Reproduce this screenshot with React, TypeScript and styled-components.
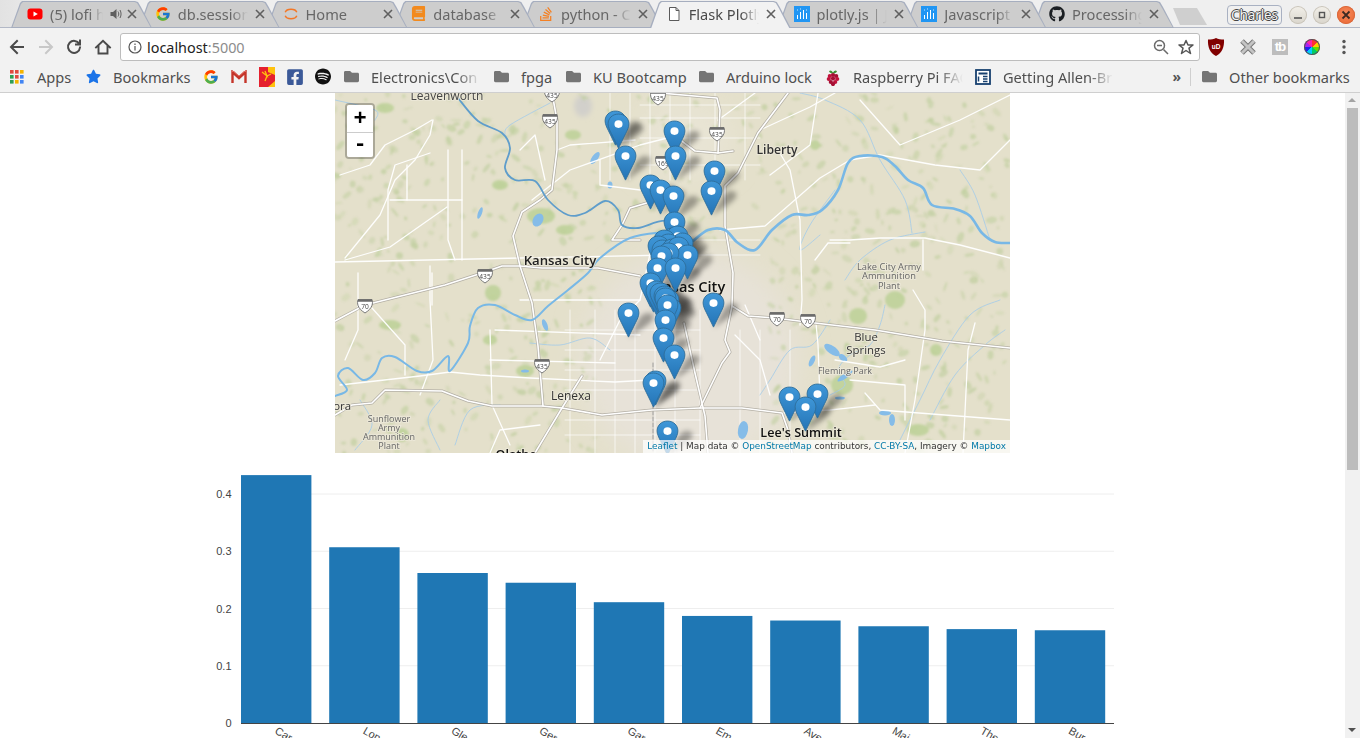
import React from "react";
import styled, { createGlobalStyle } from "styled-components";
import { FcGoogle } from "react-icons/fc";
import { FaGithub, FaStackOverflow, FaBook, FaFacebookSquare, FaSpotify, FaFolder, FaStar } from "react-icons/fa";

const Global = createGlobalStyle`
  html, body { margin: 0; height: 100%; overflow: hidden; background: #fff; }
  #root { height: 100%; }
`;

const UI = `"Noto Sans", "Open Sans", sans-serif`;

const Shell = styled.div`
  height: 738px; width: 1360px; display: flex; flex-direction: column; overflow: hidden;
  font-family: ${UI};
`;

/* ---------- tab strip ---------- */
const TabStrip = styled.div`
  height: 28px; flex: none; display: flex; align-items: flex-end; padding-left: 11px;
  background: linear-gradient(90deg, #e2e2e2 0, #efefef 60px, #efefef 100%);
  box-shadow: inset 0 -1px 0 #b2b8c6; position: relative;
`;
const TabBox = styled.div<{ $active?: boolean; $index: number }>`
  position: relative; width: 141px; height: 27px; margin-right: -13.25px; flex: none;
  display: flex; align-items: center; padding: 0 15px 2px 16px; box-sizing: border-box; gap: 7px;
  z-index: ${p => (p.$active ? 20 : 10 - p.$index)};
  color: ${p => (p.$active ? "#4a4a4a" : "#676767")};
  &::before {
    content: ""; position: absolute; inset: 0; background: #a6aebf;
    clip-path: polygon(0 100%, 9px 2px, 11px 0, 124px 0, 127px 1px, 130px 6px, 141px 100%);
  }
  &::after {
    content: ""; position: absolute; inset: 0 0 ${p => (p.$active ? "0" : "1px")} 0;
    background: ${p => (p.$active ? "#f2f2f2" : "#cdcdcd")};
    clip-path: polygon(1.5px 100%, 10px 3px, 12px 1px, 123.5px 1px, 126px 2px, 129px 7px, 139.5px 100%);
  }
  & > * { position: relative; z-index: 1; }
`;
const Favicon = styled.span`
  width: 16px; height: 16px; flex: none; display: flex; align-items: center; justify-content: center;
`;
const TabTitle = styled.span`
  flex: 1; min-width: 0; white-space: nowrap; overflow: hidden; font-size: 14.6px; line-height: 20px;
  -webkit-mask-image: linear-gradient(90deg, #000 75%, transparent 100%);
  mask-image: linear-gradient(90deg, #000 75%, transparent 100%);
`;
const CloseGlyph = styled.svg`
  width: 10px; height: 10px; flex: none; stroke: #5f5f5f; stroke-width: 1.6; fill: none;
`;
const NewTab = styled.div`
  position: absolute; left: 1173px; top: 8px; width: 34px; height: 17px; background: #cfcfcf;
  clip-path: polygon(0 0, 24px 0, 34px 100%, 7px 100%); 
`;
const WindowArea = styled.div`
  position: absolute; right: 5px; top: 5px; height: 20px; display: flex; align-items: center; gap: 6px;
`;
const ProfileButton = styled.div`
  width: 55px; height: 20px; box-sizing: border-box; border: 1px solid #a9b1c2; border-radius: 4px;
  margin-right: 1px; display: flex; align-items: center; justify-content: center;
  background: #f0f0f0; font-size: 13.5px; letter-spacing: -0.1px; color: #f4f4f4;
  text-shadow: 1px 0 0 #444, -1px 0 0 #444, 0 1px 0 #444, 0 -1px 0 #444;
`;
const WinBtn = styled.div<{ $close?: boolean }>`
  width: 18px; height: 18px; border-radius: 50%; display: flex; align-items: center; justify-content: center;
  background: ${p => (p.$close ? "radial-gradient(circle at 50% 40%, #f58a5c, #e9622d)" : "linear-gradient(#f3f0ea, #d9d5cc)")};
  box-shadow: inset 0 0 0 1px ${p => (p.$close ? "#d96a3d" : "#c9c4ba")};
`;

/* ---------- toolbar ---------- */
const Toolbar = styled.div`
  height: 34px; flex: none; background: #f2f2f2; display: flex; align-items: center; padding: 4px 0 0 3px; box-sizing: border-box;
`;
const NavBtn = styled.div`
  width: 28.5px; height: 28px; flex: none; display: flex; align-items: center; justify-content: center;
`;
const Omnibox = styled.div`
  width: 1080px; height: 28px; flex: none; margin: 0 0 0 3px; box-sizing: border-box; background: #fff;
  border: 1px solid #bdbdbd; border-radius: 3px; display: flex; align-items: center; padding: 0 1px 0 7px;
`;
const Url = styled.div`
  flex: 1; font-size: 14.4px; color: #222; margin-left: 5px; white-space: nowrap;
`;
const Port = styled.span`
  color: #8c8c8c;
`;
const OmniIcon = styled.div`
  width: 25px; height: 20px; display: flex; align-items: center; justify-content: center; flex: none;
`;
const ExtBtn = styled.div`
  width: 32px; height: 28px; flex: none; display: flex; align-items: center; justify-content: center;
`;
const TbBadge = styled.div`
  width: 16px; height: 16px; background: #bdbdbd; color: #fff; font: bold 13.5px/16px "Liberation Sans", sans-serif; text-align: center; letter-spacing: -1px;
`;
const ColorWheel = styled.div`
  width: 16px; height: 16px; border-radius: 50%; position: relative;
  background: conic-gradient(#f33 0 45deg, #fc0 45deg 90deg, #6d0 90deg 135deg, #0c6 135deg 180deg, #0cf 180deg 225deg, #22e 225deg 270deg, #a2e 270deg 315deg, #f2a 315deg 360deg);
  box-shadow: 0 0 0 1px #555 inset;
`;

/* ---------- bookmarks ---------- */
const BookmarkBar = styled.div`
  height: 31px; flex: none; box-sizing: border-box; background: #f2f2f2; border-bottom: 1px solid #cfcfcf;
  display: flex; align-items: center; padding: 0 10px 1px 9px;
`;
const Bookmark = styled.div<{ $w: number }>`
  width: ${p => p.$w}px; flex: none; display: flex; align-items: center; gap: 12px; min-width: 0;
`;
const BookmarkLabel = styled.span<{ $fade?: boolean }>`
  font-size: 14.6px; color: #4f4f4f; white-space: nowrap; overflow: hidden;
  ${p => p.$fade && `flex: 1; min-width: 0; margin-right: 12px; -webkit-mask-image: linear-gradient(90deg, #000 78%, transparent 100%); mask-image: linear-gradient(90deg, #000 78%, transparent 100%);`}
`;
const IconSlot = styled.span`
  width: 16px; height: 16px; flex: none; display: flex; align-items: center; justify-content: center;
`;
const BarSpacer = styled.div` flex: 1; `;
const Chevron = styled.span`
  font-size: 14px; color: #555; font-weight: 700; margin-right: 9px; line-height: 1;
`;
const BarDivider = styled.div`
  width: 1px; height: 18px; background: #cfcfcf; margin-right: 10px;
`;

/* ---------- page ---------- */
const Viewport = styled.div`
  flex: 1; display: flex; min-height: 0;
`;
const PageBody = styled.main`
  flex: 1; min-width: 0; overflow: hidden; display: flex; flex-direction: column; align-items: center; background: #fff;
`;
const Scrollbar = styled.div`
  width: 15px; flex: none; background: #f1f1f1; display: flex; flex-direction: column; align-items: center; position: relative;
`;
const ScrollArrow = styled.div<{ $down?: boolean }>`
  position: absolute; ${p => (p.$down ? "bottom: 6px;" : "top: 5px;")} left: 3px; width: 0; height: 0;
  border-left: 4px solid transparent; border-right: 4px solid transparent;
  ${p => (p.$down ? "border-top: 4px solid #505050;" : "border-bottom: 4px solid #a3a3a3;")}
`;
const ScrollThumb = styled.div`
  margin-top: 15px; width: 11px; height: 362px; background: #bcbcbc; margin-left: 2px; align-self: flex-start;
`;

/* ---------- map ---------- */
const MapFrame = styled.section`
  position: relative; width: 675px; height: 360px; flex: none; overflow: hidden; background: #e4e0cb;
`;
const MapArt = styled.svg`
  display: block; width: 675px; height: 360px;
`;
const PinSvg = styled.svg`
  position: absolute; width: 23px; height: 36px; overflow: visible;
`;
const PinShadow = styled.svg`
  position: absolute; width: 42px; height: 36px; overflow: visible;
`;
const ZoomBox = styled.div`
  position: absolute; left: 10px; top: 10px; width: 30px; height: 56px; box-sizing: border-box;
  border: 2px solid rgba(0,0,0,.25); border-radius: 4px; background-clip: padding-box; display: flex; flex-direction: column; z-index: 5;
`;
const ZoomBtn = styled.div<{ $last?: boolean }>`
  flex: 1; background: #fff; display: flex; align-items: center; justify-content: center;
  font: bold 22px/1 "Liberation Mono", monospace; color: #000;
  ${p => (p.$last ? "border-radius: 0 0 2px 2px;" : "border-bottom: 1px solid #ccc; border-radius: 2px 2px 0 0; padding-top: 3px;")}
`;
const Attribution = styled.div`
  position: absolute; right: 0; bottom: 0; height: 13px; padding: 0 4px; z-index: 5; white-space: nowrap;
  background: rgba(255,255,255,.72); color: #333; font: 8.9px/13px "DejaVu Sans", sans-serif;
`;
const AttrLink = styled.span` color: #0078a8; `;

const ChartArt = styled.svg`
  display: block; width: 1100px; height: 285px; flex: none;
`;

/* ---------- helpers ---------- */
type P = [number, number];
const smooth = (pts: P[]) => {
  let d = `M${pts[0][0]} ${pts[0][1]}`;
  for (let i = 0; i < pts.length - 1; i++) {
    const a = pts[Math.max(i - 1, 0)], b = pts[i], c = pts[i + 1], e = pts[Math.min(i + 2, pts.length - 1)];
    d += `C${(b[0] + (c[0] - a[0]) / 6).toFixed(1)} ${(b[1] + (c[1] - a[1]) / 6).toFixed(1)} ${(c[0] - (e[0] - b[0]) / 6).toFixed(1)} ${(c[1] - (e[1] - b[1]) / 6).toFixed(1)} ${c[0]} ${c[1]}`;
  }
  return d;
};
const line = (pts: P[]) => "M" + pts.map(p => p.join(" ")).join("L");

const missouri: P[] = [[1010,243],[995,242],[982,233],[970,216],[955,209],[932,205],[923,188],[908,180],[895,166],[882,157],[860,156],[848,163],[838,190],[822,210],[808,215],[792,215],[772,230],[755,250],[738,243],[725,230],[708,230],[693,241]];
const missouriWest: P[] = [[458,98],[478,121],[502,133],[510,148],[505,168],[515,180],[535,181],[548,200],[568,215],[585,213],[605,201],[618,210],[622,225],[638,228],[668,221],[693,241]];
const kaw: P[] = [[665,232],[630,238],[600,258],[588,273],[568,290],[548,306],[532,320],[515,315],[495,305],[478,308],[470,326],[468,343],[450,371],[448,356],[432,371],[417,371],[395,357],[382,358],[375,373],[363,380],[348,368],[338,376],[347,390],[335,396]];
const thinWater: P[] = [
  [[885,305],[880,325],[870,345],[850,355],[838,370],[845,385],[830,395]],
  [[912,233],[905,200],[880,160],[860,120],[825,100],[800,93]],
  [[960,170],[975,195],[990,240]],
  [[845,280],[860,260],[890,240],[925,232]],
  [[820,235],[800,250],[810,225],[835,190]],
  [[830,320],[812,345],[790,350],[770,380],[760,395]],
  [[1000,300],[970,315],[940,360],[920,400],[900,440]],
  [[1005,330],[985,345],[955,375],[930,420]],
  [[440,400],[428,420],[440,450]],
  [[360,400],[372,425],[355,450]],
  [[500,405],[470,410],[455,445]],
  [[610,350],[590,338],[560,345],[530,343]],
  [[335,100],[375,110],[375,120]],
  [[550,103],[510,125],[505,135]],
];
const highways: P[][] = [
  [[552,93],[557,120],[557,150],[552,190],[540,200],[522,212],[513,236],[520,266],[532,303],[538,346],[543,406]],
  [[335,321],[365,305],[445,285],[482,273],[502,266],[520,266],[542,268],[598,268],[640,276]],
  [[732,306],[748,316],[775,318],[815,323],[875,330],[942,341],[1010,348]],
  [[788,93],[758,133],[738,173],[725,186],[725,226],[733,273],[732,306],[725,340],[730,352],[722,363],[700,408]],
  [[660,93],[717,98],[720,110],[718,153],[733,151]],
  [[675,136],[695,151],[718,153]],
  [[684,323],[695,373],[705,416],[708,453]],
  [[335,415],[352,405],[372,403],[385,390],[442,391],[468,401],[492,406],[542,406],[562,408],[602,415],[652,410],[700,408],[742,408],[782,413],[788,430],[792,453]],
  [[582,376],[562,408],[535,453]],
  [[640,240],[612,240],[622,225],[630,208],[670,196]],
];
const roads: P[][] = [
  [[335,262],[520,258],[670,255]],
  [[345,258],[380,215],[395,180],[415,160],[430,135],[433,120]],
  [[340,175],[370,165],[385,145],[415,130],[432,120]],
  [[388,240],[388,190],[395,165],[430,153]],
  [[448,150],[448,240],[455,260]],
  [[462,150],[462,200],[462,260]],
  [[407,200],[462,200]],
  [[390,200],[407,200],[407,165]],
  [[430,266],[430,300],[433,360],[420,395]],
  [[490,330],[492,405],[510,445]],
  [[532,200],[570,170],[640,145],[675,136]],
  [[557,150],[570,145],[635,140]],
  [[600,160],[600,185],[640,190]],
  [[755,93],[725,115],[718,120]],
  [[760,130],[810,107],[835,93]],
  [[770,175],[810,145],[818,93]],
  [[778,150],[790,170],[800,220],[802,300],[800,325]],
  [[720,230],[765,226],[820,178],[850,160],[880,155],[935,165],[980,170],[1010,140]],
  [[830,240],[850,240],[880,238],[925,238],[960,245],[1010,258]],
  [[815,260],[828,243],[850,243]],
  [[923,240],[923,270]],
  [[816,323],[818,345],[820,400]],
  [[835,360],[880,367],[905,360]],
  [[913,290],[925,310],[925,330],[915,400],[905,453]],
  [[975,323],[968,350],[963,453]],
  [[865,393],[880,410],[1010,420]],
  [[782,413],[830,410],[875,405]],
  [[340,385],[420,376],[450,372],[480,375],[530,378],[615,382],[650,380]],
  [[520,300],[640,300]],
  [[495,330],[640,335]],
  [[490,360],[615,363]],
  [[735,335],[760,360],[770,395]],
  [[760,340],[745,305]],
  [[520,150],[535,135],[545,180]],
  [[447,207],[390,247],[345,260]],
  [[653,240],[640,300],[620,320],[600,360]],
  [[358,273],[358,330],[345,360]],
  [[432,273],[432,305]],
  [[372,308],[405,345],[405,375]],
  [[860,100],[900,145],[960,120],[1010,95]],
  [[850,380],[905,385],[905,420]],
  [[540,425],[500,430],[490,453]],
];
const grid: P[][] = [];
[570,595,615,635,655,675,700].forEach(x => grid.push([[x, 310],[x, 453]]));
[330,350,370,390,420,435].forEach(y => grid.push([[565, y],[700, y]]));
[610,630,650,670,690,715,745].forEach(x => grid.push([[x, 93],[x, 180]]));
[105,118,138,165].forEach(y => grid.push([[640, y],[760, y]]));
[240,255].forEach(y => grid.push([[680, y],[760, y]]));
[740,760,790].forEach(x => grid.push([[x, 330],[x, 453]]));

let seed = 17;
const rnd = () => { seed = (seed * 16807) % 2147483647; return seed / 2147483647; };
const blotches = Array.from({ length: 900 }, () => {
  const cx = 335 + rnd() * 675, cy = 93 + rnd() * 360;
  return { cx: +cx.toFixed(1), cy: +cy.toFixed(1), rx: +(1.2 + rnd() * 4.5).toFixed(1), ry: +(0.8 + rnd() * 2.6).toFixed(1), o: +(0.3 + rnd() * 0.45).toFixed(2), r: Math.round(rnd() * 180) };
}).filter(b => !(b.cx > 600 && b.cx < 770 && b.cy > 240));
const greenPatches: [number, number, number, number][] = [
  [541,216,14,8],[573,135,8,5],[500,185,8,5],[493,293,8,8],[525,371,9,6],[858,316,9,8],[895,300,10,9],[936,350,6,6],
  [918,430,11,6],[842,385,11,10],[815,145,5,5],[490,340,7,5],[390,325,11,5],[402,435,7,7],[385,108,9,5],[565,230,9,5],
];
const lakes: [number, number, number, number, number][] = [
  [538,220,5,7,30],[595,158,3,7,35],[610,185,2.5,3.5,0],[480,213,2,6,20],[545,325,2.5,6,-20],[525,371,4,1.6,0],[832,350,9,4,35],[843,358,5,3,40],[845,376,9,2.5,-35],[812,361,2.5,6,25],[743,430,5,9,10],[885,413,6,2.5,0],[892,420,3,6,0],[840,398,5,1.5,0],
];
const shields: [number, number, string][] = [[552,95,"435"],[550,121,"435"],[658,98,"435"],[717,134,"435"],[663,163,"169"],[542,366,"435"],[365,306,"70"],[485,276,"435"],[777,319,"70"],[808,321,"70"]];
const labels: { x: number; y: number; t: string; s: number; c?: string; w?: number; a?: "start" | "middle" | "end" }[] = [
  { x: 447, y: 100, t: "Leavenworth", s: 12, c: "#444", a: "middle" },
  { x: 560, y: 265, t: "Kansas City", s: 13.2, c: "#222", w: 600, a: "middle" },
  { x: 685, y: 292, t: "Kansas City", s: 14.6, c: "#111", w: 600, a: "middle" },
  { x: 777, y: 154, t: "Liberty", s: 12.2, c: "#333", w: 600, a: "middle" },
  { x: 889, y: 270, t: "Lake City Army", s: 9.3, c: "#666", a: "middle" },
  { x: 889, y: 279, t: "Ammunition", s: 9.3, c: "#666", a: "middle" },
  { x: 889, y: 289, t: "Plant", s: 9.3, c: "#666", a: "middle" },
  { x: 866, y: 341, t: "Blue", s: 11.4, c: "#333", a: "middle" },
  { x: 866, y: 354, t: "Springs", s: 11.4, c: "#333", a: "middle" },
  { x: 845, y: 374, t: "Fleming Park", s: 9, c: "#666", a: "middle" },
  { x: 571, y: 400, t: "Lenexa", s: 12, c: "#333", a: "middle" },
  { x: 389, y: 422, t: "Sunflower", s: 9, c: "#666", a: "middle" },
  { x: 389, y: 431, t: "Army", s: 9, c: "#666", a: "middle" },
  { x: 389, y: 440, t: "Ammunition", s: 9, c: "#666", a: "middle" },
  { x: 389, y: 449, t: "Plant", s: 9, c: "#666", a: "middle" },
  { x: 801, y: 437, t: "Lee's Summit", s: 12.6, c: "#111", w: 600, a: "middle" },
  { x: 516, y: 459, t: "Olathe", s: 12.6, c: "#111", w: 600, a: "middle" },
  { x: 351, y: 410, t: "ora", s: 11.4, c: "#333", a: "end" },
];

/* marker dots, in page coordinates */
const pinDots: P[] = [
  [615,121],[618,124],[674,131],[625,156],[675,156],[714,171],[650,185],[711,191],[660,190],[673,196],[674,222],
  [672,238],[677,236],[664,240],[682,243],[668,244],[658,246],[662,250],[672,249],[678,247],[687,255],[668,253],[661,256],[657,268],[675,268],
  [653,288],[650,283],[656,291],[660,293],[664,296],[668,300],[665,298],[670,308],[667,305],[628,313],[713,303],[665,320],[663,338],[674,355],[655,381],[653,383],
  [667,431],[789,397],[817,394],[805,407],
];

const PIN = "M12.5 1.2C5.8 1.2 1.2 6.2 1.2 12.4C1.2 16 3 19.8 4.8 23.5L12.5 40L20.2 23.5C22 19.8 23.8 16 23.8 12.4C23.8 6.2 19.2 1.2 12.5 1.2Z";

const Pin = ({ at }: { at: P }) => (
  <PinSvg viewBox="0 0 25 41" preserveAspectRatio="none" style={{ left: at[0] - 335 - 11.5, top: at[1] - 93 - 11.5 }}>
    <path d={PIN} fill="url(#pinFill)" stroke="#2e6d9a" strokeWidth="1" />
    <circle cx="12.5" cy="12.6" r="4.4" fill="#fff" />
  </PinSvg>
);
const Shadow = ({ at }: { at: P }) => (
  <PinShadow viewBox="0 0 42 36" style={{ left: at[0] - 335 - 11.5, top: at[1] - 93 - 11.5 }}>
    <path d="M11.5 36L22 17C25 11 33 9 36 13C38 17 33 21 29 24Z" fill="rgba(0,0,0,.32)" filter="url(#pinBlur)" />
  </PinShadow>
);

const Shield = ({ x, y, t }: { x: number; y: number; t: string }) => (
  <g transform={`translate(${x} ${y})`}>
    <path d="M-7 -6.5H7C8 -3 8 2 0 7C-8 2 -8 -3 -7 -6.5Z" fill="#fff" stroke="#6b6b6b" strokeWidth="0.9" />
    <path d="M-7 -6.5H7L7.2 -4.2H-7.2Z" fill="#6b6b6b" />
    <text x="0" y="2.6" textAnchor="middle" fontSize="6.6" fontFamily="'Open Sans', sans-serif" fill="#444">{t}</text>
  </g>
);

const MapPicture = () => (
  <MapArt viewBox="335 93 675 360">
    <defs>
      <linearGradient id="pinFill" x1="0" y1="0" x2="0" y2="1">
        <stop offset="0" stopColor="#3f97d8" />
        <stop offset="1" stopColor="#2474b6" />
      </linearGradient>
      <filter id="soft" x="-5%" y="-5%" width="110%" height="110%"><feGaussianBlur stdDeviation="1" /></filter>
      <filter id="soft2" x="-20%" y="-20%" width="140%" height="140%"><feGaussianBlur stdDeviation="14" /></filter>
      <filter id="pinBlur" x="-40%" y="-40%" width="180%" height="180%"><feGaussianBlur stdDeviation="2.8" /></filter>
    </defs>
    <ellipse cx="690" cy="360" rx="110" ry="110" fill="#e7e2d8" filter="url(#soft2)" />
    <ellipse cx="685" cy="140" rx="50" ry="40" fill="#e8e4d4" filter="url(#soft2)" />
    <ellipse cx="583" cy="106" rx="9" ry="11" fill="#d2d0cb" filter="url(#pinBlur)" />
    <g filter="url(#soft)">
      {blotches.map((b, i) => (
        <ellipse key={i} cx={b.cx} cy={b.cy} rx={b.rx} ry={b.ry} fill="#c0cf9f" opacity={b.o} transform={`rotate(${b.r} ${b.cx} ${b.cy})`} />
      ))}
      {greenPatches.map(([x, y, a, c], i) => <ellipse key={i} cx={x} cy={y} rx={a} ry={c} fill="#bcd096" opacity=".85" />)}
    </g>
    <g fill="none" strokeLinecap="round" strokeLinejoin="round">
      {grid.map((p, i) => <path key={i} d={line(p)} stroke="#fff" strokeWidth=".9" opacity=".75" />)}
      {thinWater.map((p, i) => <path key={i} d={smooth(p as P[])} stroke="#a9cde6" strokeWidth=".9" />)}
      {lakes.map(([x, y, a, c, r], i) => <ellipse key={i} cx={x} cy={y} rx={a} ry={c} fill="#85bce8" stroke="none" transform={`rotate(${r} ${x} ${y})`} />)}
      {roads.map((p, i) => <path key={i} d={line(p)} stroke="#fff" strokeWidth="1.3" opacity=".95" />)}
      <path d="M653 363V453" stroke="#9a9a9a" strokeWidth="1" strokeDasharray="4 2" />
      {highways.map((p, i) => <path key={i} d={line(p)} stroke="#b3afa5" strokeWidth="3" />)}
      {highways.map((p, i) => <path key={i} d={line(p)} stroke="#fff" strokeWidth="1.6" />)}
      <path d={smooth(missouriWest)} stroke="#5f9dcb" strokeWidth="1.8" />
      <path d={smooth(missouri)} stroke="#78b8e6" strokeWidth="2.6" />
      <path d={smooth(kaw)} stroke="#78b8e6" strokeWidth="2" />
    </g>
    {shields.map(s => <Shield key={`${s[0]}-${s[1]}`} x={s[0]} y={s[1]} t={s[2]} />)}
    {labels.map(l => (
      <text key={`${l.t}${l.y}`} x={l.x} y={l.y} textAnchor={l.a ?? "start"} fontSize={l.s} fontWeight={l.w ?? 400} fill={l.c}
        fontFamily="'Open Sans', sans-serif" stroke="#ece8da" strokeWidth="2" paintOrder="stroke" strokeOpacity=".8">{l.t}</text>
    ))}
  </MapArt>
);

const bars = [0.433, 0.307, 0.262, 0.245, 0.211, 0.187, 0.179, 0.169, 0.164, 0.162];
const barNames = ["Car", "Lon", "Gle", "Ger", "Gar", "Em", "Ave", "Mai", "The", "Bur"];
const BarChart = () => (
  <ChartArt viewBox="123 453 1100 285">
    {[0.1, 0.2, 0.3, 0.4].map(t => (
      <line key={t} x1="241" x2="1114" y1={723 - t * 572.5} y2={723 - t * 572.5} stroke="#eee" strokeWidth="1" />
    ))}
    {bars.map((v, i) => (
      <rect key={i} x={241 + i * 88.2} y={723 - v * 572.5} width="70.4" height={v * 572.5} fill="#1f77b4" />
    ))}
    <line x1="241" x2="1114" y1="723.5" y2="723.5" stroke="#444" strokeWidth="1" />
    {[0, 0.1, 0.2, 0.3, 0.4].map(t => (
      <text key={t} x="231.5" y={727 - t * 572.5} textAnchor="end" fontSize="11" fontFamily="'Liberation Sans', sans-serif" fill="#444">{t}</text>
    ))}
    {barNames.map((n, i) => (
      <text key={n} x={274 + i * 88.2} y="733" transform={`rotate(30 ${274 + i * 88.2} 733)`} fontSize="11" fontFamily="'Liberation Sans', sans-serif" fill="#444">{n}</text>
    ))}
  </ChartArt>
);

/* ---------- chrome icons ---------- */
const Stroke = ({ d, c = "#4a4a4a", w = 2, s = 18 }: { d: string; c?: string; w?: number; s?: number }) => (
  <svg width={s} height={s} viewBox="0 0 18 18" fill="none" stroke={c} strokeWidth={w} strokeLinecap="square" strokeLinejoin="miter"><path d={d} /></svg>
);
const Close = () => <CloseGlyph viewBox="0 0 10 10"><path d="M1 1L9 9M9 1L1 9" /></CloseGlyph>;

const Youtube = () => (
  <svg width="16" height="16" viewBox="0 0 16 16"><rect x="0.5" y="2.5" width="15" height="11" rx="3" fill="#f00" /><path d="M6.5 5.5L10.8 8L6.5 10.5Z" fill="#fff" /></svg>
);
const Jupyter = () => (
  <svg width="18" height="18" viewBox="0 0 18 18" fill="none" stroke="#f37726" strokeWidth="1.6"><path d="M2.5 7C4 2.5 14 2.5 15.5 7" /><path d="M2.5 11C4 15.5 14 15.5 15.5 11" /></svg>
);
const PlotlyMark = () => (
  <svg width="16" height="16" viewBox="0 0 16 16"><rect width="16" height="16" fill="#2196f3" /><path d="M3.5 9V13M6.5 6V13M9.5 4V13M12.5 7V13" stroke="#fff" strokeWidth="1" /><path d="M3 4h1M6 3h1M12 4h1" stroke="#cfe9ff" strokeWidth="1" /></svg>
);
const PageFile = () => (
  <svg width="16" height="16" viewBox="0 0 16 16" fill="#fff" stroke="#5a5a5a" strokeWidth="1"><path d="M3.5 1.5H10L13 4.5V14.5H3.5Z" /><path d="M10 1.5V4.5H13" fill="none" /></svg>
);
const Speaker = () => (
  <svg width="12" height="12" viewBox="0 0 12 12" fill="#5f5f5f" stroke="none" style={{ flex: "none", marginRight: -2 }}>
    <path d="M0.5 4H3L6.5 1V11L3 8H0.5Z" /><path d="M8 3.5C9 5 9 7 8 8.5" stroke="#5f5f5f" fill="none" /><path d="M10 2C11.4 4.5 11.4 7.5 10 10" stroke="#5f5f5f" fill="none" />
  </svg>
);
const AppsGrid = () => {
  const c = ["#e04a3f", "#e04a3f", "#f4b400", "#2f9e54", "#e04a3f", "#4285f4", "#2f9e54", "#f4b400", "#4285f4"];
  return (
    <svg width="14" height="14" viewBox="0 0 14 14">
      {c.map((f, i) => <rect key={i} x={(i % 3) * 5} y={Math.floor(i / 3) * 5} width="3.6" height="3.6" fill={f} />)}
    </svg>
  );
};
const GmailM = () => (
  <svg width="16" height="14" viewBox="0 0 16 14" fill="none"><path d="M1.5 13V2L8 8L14.5 2V13" stroke="#c5352a" strokeWidth="2.4" /><path d="M1 1.5H3L8 6L13 1.5H15" stroke="#e2685f" strokeWidth="1" /></svg>
);
const PittLogo = () => (
  <svg width="16" height="20" viewBox="0 0 16 20"><rect width="16" height="20" fill="#ffc20e" /><path d="M0 0H9V5L16 8V14L9 20H0Z" fill="#e5202e" /><path d="M3 5L8 9L6 4M8 9L12 7M8 9L6 14" stroke="#ffc20e" strokeWidth="1.3" fill="none" /></svg>
);
const Raspberry = () => (
  <svg width="16" height="18" viewBox="0 0 16 18"><path d="M4 3.5C5 1.5 7 3 8 4.5C9 3 11 1.5 12 3.5C11 5 9.5 5.5 8 5.5C6.5 5.5 5 5 4 3.5Z" fill="#3f8f34" />
    {[[8,7],[4.8,8],[11.2,8],[3.8,11],[8,10.5],[12.2,11],[5.8,14],[10.2,14],[8,16]].map(([x, y], i) => <circle key={i} cx={x} cy={y} r="2.1" fill={i % 2 ? "#c1133c" : "#a50f33"} />)}
  </svg>
);
const SiteDoc = () => (
  <svg width="16" height="16" viewBox="0 0 16 16"><rect x="1" y="1" width="14" height="14" fill="#fff" stroke="#17406f" strokeWidth="1.8" /><path d="M3.5 4.5H12.5" stroke="#17406f" strokeWidth="2" /><path d="M3.5 7.5V12.5M8 7.5H12.5M8 10H12.5M8 12.5H12.5" stroke="#17406f" strokeWidth="1.5" /></svg>
);
const UBlock = () => (
  <svg width="18" height="20" viewBox="0 0 18 20"><path d="M1 2.5C4 2.5 7 2 9 1C11 2 14 2.5 17 2.5C17.5 10 15 16 9 19C3 16 .5 10 1 2.5Z" fill="#800000" /><text x="9" y="12" textAnchor="middle" fontSize="6.5" fontWeight="700" fontFamily="'Liberation Sans', sans-serif" fill="#fff">uD</text></svg>
);
const GreyX = () => (
  <svg width="18" height="18" viewBox="0 0 18 18" fill="none"><path d="M3 3L15 15M15 3L3 15" stroke="#777" strokeWidth="5" /><path d="M3 3L15 15M15 3L3 15" stroke="#c4c4c4" strokeWidth="3" /></svg>
);
const Folder = () => <FaFolder size={15} color="#757575" />;

const tabs: { title: string; icon: React.ReactNode; active?: boolean; audio?: boolean }[] = [
  { title: "(5) lofi hip", icon: <Youtube />, audio: true },
  { title: "db.session.q", icon: <FcGoogle size={16} /> },
  { title: "Home", icon: <Jupyter /> },
  { title: "database", icon: <FaBook size={15} color="#f28a1e" /> },
  { title: "python - Ca", icon: <FaStackOverflow size={16} color="#f48024" /> },
  { title: "Flask Plotly", icon: <PageFile />, active: true },
  { title: "plotly.js | Ja", icon: <PlotlyMark /> },
  { title: "Javascript G", icon: <PlotlyMark /> },
  { title: "Processing", icon: <FaGithub size={16} color="#1b1f23" /> },
];

export default function App() {
  return (
    <Shell>
      <Global />
      <TabStrip>
        {tabs.map((t, i) => (
          <TabBox key={t.title} $active={t.active} $index={i}>
            <Favicon>{t.icon}</Favicon>
            <TabTitle>{t.title}</TabTitle>
            {t.audio && <Speaker />}
            <Close />
          </TabBox>
        ))}
        <NewTab />
        <WindowArea>
          <ProfileButton>Charles</ProfileButton>
          <WinBtn><svg width="10" height="10" viewBox="0 0 10 10"><path d="M1 8H9" stroke="#555" strokeWidth="1.6" /></svg></WinBtn>
          <WinBtn><svg width="10" height="10" viewBox="0 0 10 10"><rect x="2.5" y="2.5" width="5" height="5" fill="none" stroke="#555" strokeWidth="1.4" /></svg></WinBtn>
          <WinBtn $close><svg width="10" height="10" viewBox="0 0 10 10"><path d="M1.5 1.5L8.5 8.5M8.5 1.5L1.5 8.5" stroke="#3d2a22" strokeWidth="1.8" /></svg></WinBtn>
        </WindowArea>
      </TabStrip>

      <Toolbar>
        <NavBtn><Stroke d="M15 9H3.5M9 3L3 9L9 15" /></NavBtn>
        <NavBtn><Stroke d="M3 9H14.5M9 3L15 9L9 15" c="#c8c8c8" /></NavBtn>
        <NavBtn><Stroke d="M14.3 6A6 6 0 1 0 15 9.5M15 2.5V6.5H11" /></NavBtn>
        <NavBtn><Stroke d="M2 9.5L9 2.8L16 9.5M4.5 8V15.5H13.5V8" w={1.9} /></NavBtn>
        <Omnibox>
          <svg width="14" height="14" viewBox="0 0 14 14" fill="none" stroke="#555" strokeWidth="1.2"><circle cx="7" cy="7" r="6" /><path d="M7 6V10.5M7 3.5V5" /></svg>
          <Url>localhost<Port>:5000</Port></Url>
          <OmniIcon><svg width="16" height="16" viewBox="0 0 16 16" fill="none" stroke="#6a6a6a" strokeWidth="1.5"><circle cx="6.5" cy="6.5" r="5" /><path d="M10.5 10.5L15 15M4 6.5H9" /></svg></OmniIcon>
          <OmniIcon><svg width="16" height="16" viewBox="0 0 16 16" fill="none" stroke="#555" strokeWidth="1.5" strokeLinejoin="round"><path d="M8 1.5L10 6H15L11 9.2L12.5 14.5L8 11.5L3.5 14.5L5 9.2L1 6H6Z" /></svg></OmniIcon>
        </Omnibox>
        <ExtBtn><UBlock /></ExtBtn>
        <ExtBtn><GreyX /></ExtBtn>
        <ExtBtn><TbBadge>tb</TbBadge></ExtBtn>
        <ExtBtn><ColorWheel /></ExtBtn>
        <ExtBtn><svg width="4" height="16" viewBox="0 0 4 16" fill="#555"><circle cx="2" cy="2.5" r="1.7" /><circle cx="2" cy="8" r="1.7" /><circle cx="2" cy="13.5" r="1.7" /></svg></ExtBtn>
      </Toolbar>

      <BookmarkBar>
        <Bookmark $w={76}><IconSlot><AppsGrid /></IconSlot><BookmarkLabel>Apps</BookmarkLabel></Bookmark>
        <Bookmark $w={118}><IconSlot><FaStar size={15} color="#1a73e8" /></IconSlot><BookmarkLabel>Bookmarks</BookmarkLabel></Bookmark>
        <Bookmark $w={28}><IconSlot><FcGoogle size={16} /></IconSlot></Bookmark>
        <Bookmark $w={28}><IconSlot><GmailM /></IconSlot></Bookmark>
        <Bookmark $w={28}><IconSlot><PittLogo /></IconSlot></Bookmark>
        <Bookmark $w={28}><IconSlot><FaFacebookSquare size={18} color="#3b5998" /></IconSlot></Bookmark>
        <Bookmark $w={28}><IconSlot><FaSpotify size={17} color="#111" /></IconSlot></Bookmark>
        <Bookmark $w={150}><IconSlot><Folder /></IconSlot><BookmarkLabel $fade>Electronics\Con</BookmarkLabel></Bookmark>
        <Bookmark $w={72}><IconSlot><Folder /></IconSlot><BookmarkLabel>fpga</BookmarkLabel></Bookmark>
        <Bookmark $w={133}><IconSlot><Folder /></IconSlot><BookmarkLabel>KU Bootcamp</BookmarkLabel></Bookmark>
        <Bookmark $w={127}><IconSlot><Folder /></IconSlot><BookmarkLabel>Arduino lock</BookmarkLabel></Bookmark>
        <Bookmark $w={150}><IconSlot><Raspberry /></IconSlot><BookmarkLabel $fade>Raspberry Pi FAQ</BookmarkLabel></Bookmark>
        <Bookmark $w={150}><IconSlot><SiteDoc /></IconSlot><BookmarkLabel $fade>Getting Allen-Br</BookmarkLabel></Bookmark>
        <BarSpacer />
        <Chevron>»</Chevron>
        <BarDivider />
        <Bookmark $w={149}><IconSlot><Folder /></IconSlot><BookmarkLabel>Other bookmarks</BookmarkLabel></Bookmark>
      </BookmarkBar>

      <Viewport>
        <PageBody>
          <MapFrame>
            <MapPicture />
            {pinDots.map((p, i) => <Shadow key={i} at={p} />)}
            {pinDots.map((p, i) => <Pin key={i} at={p} />)}
            <ZoomBox><ZoomBtn>+</ZoomBtn><ZoomBtn $last>-</ZoomBtn></ZoomBox>
            <Attribution><AttrLink>Leaflet</AttrLink> | Map data © <AttrLink>OpenStreetMap</AttrLink> contributors, <AttrLink>CC-BY-SA</AttrLink>, Imagery © <AttrLink>Mapbox</AttrLink></Attribution>
          </MapFrame>
          <BarChart />
        </PageBody>
        <Scrollbar>
          <ScrollArrow />
          <ScrollThumb />
          <ScrollArrow $down />
        </Scrollbar>
      </Viewport>
    </Shell>
  );
}
